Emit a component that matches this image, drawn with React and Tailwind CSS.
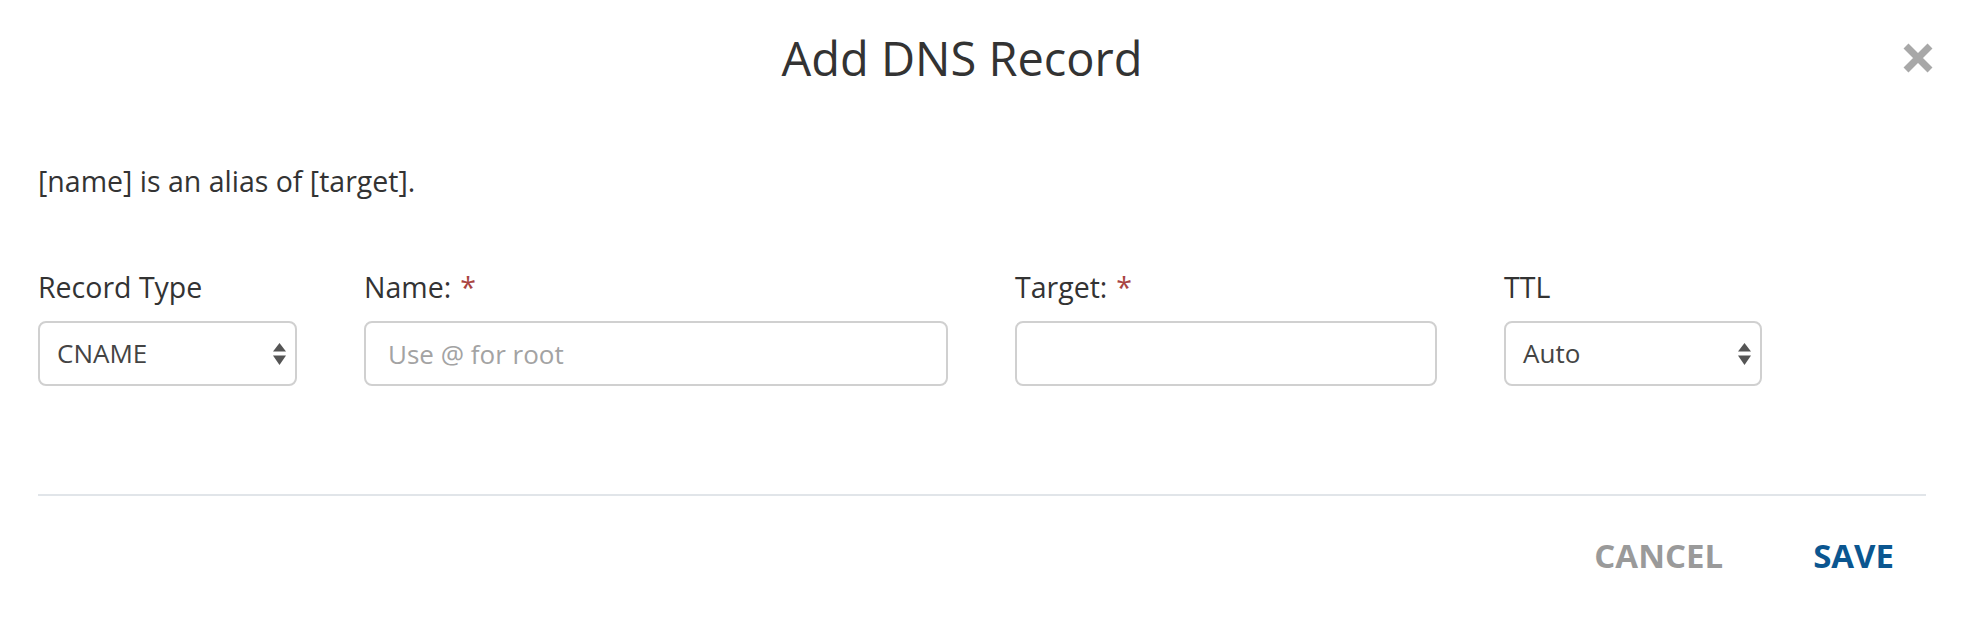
const SelectArrows = () => (
  <svg width="13" height="22" viewBox="0 0 13 22" className="shrink-0">
    <path d="M6.5 0 L13 8.5 L0 8.5 Z" fill="#555555" />
    <path d="M0 12.5 L13 12.5 L6.5 22 Z" fill="#555555" />
  </svg>
)

const Label = ({ children, required }) => (
  <div className="text-[28.5px] leading-[38px] text-[#333333]">
    {children}
    {required && <span className="ml-[9px] text-[#a94442]">*</span>}
  </div>
)

const FakeSelect = ({ value }) => (
  <div className="mt-[15px] flex h-[65px] items-center justify-between rounded-[8px] border-2 border-[#d0d0d0] bg-white pl-[17px] pr-[9px]">
    <span className="text-[26px] text-[#444444]">{value}</span>
    <SelectArrows />
  </div>
)

const TextInput = ({ placeholder }) => (
  <input
    type="text"
    placeholder={placeholder}
    className="mt-[15px] block h-[65px] w-full rounded-[8px] border-2 border-[#d0d0d0] bg-white pl-[22px] text-[26px] text-[#444444] outline-none placeholder:text-[#a3a3a3]"
  />
)

export default function App() {
  return (
    <div className="h-[624px] w-[1962px] overflow-hidden bg-white font-['Open_Sans',sans-serif] text-[#333333]">
      <header className="flex items-start pt-[26px]">
        <h1 className="flex-1 pl-[21px] text-center text-[47px] font-medium leading-[64px] text-[#333333]">
          Add DNS Record
        </h1>
        <button className="mr-[29px] mt-[17px] h-[30px] w-[30px]" aria-label="Close">
          <svg width="30" height="30" viewBox="0 0 30 30">
            <path d="M3 3 L27 27 M27 3 L3 27" stroke="#a8a8a8" strokeWidth="7" />
          </svg>
        </button>
      </header>

      <p className="mt-[72px] pl-[38px] text-[28.5px] leading-[38px]">[name] is an alias of [target].</p>

      <div className="mt-[68px] flex gap-[67px] pl-[38px]">
        <div className="w-[259px]">
          <Label>Record Type</Label>
          <FakeSelect value="CNAME" />
        </div>
        <div className="w-[584px]">
          <Label required>Name:</Label>
          <TextInput placeholder="Use @ for root" />
        </div>
        <div className="w-[422px]">
          <Label required>Target:</Label>
          <TextInput placeholder="" />
        </div>
        <div className="w-[258px]">
          <Label>TTL</Label>
          <FakeSelect value="Auto" />
        </div>
      </div>

      <div className="ml-[38px] mt-[108px] h-[2px] w-[1888px] bg-[#e1e5e9]" />

      <div className="mt-[38px] flex justify-end gap-[90px] pr-[68px] text-[33px] font-bold leading-[44px]">
        <button className="text-[#9a9a9a]">CANCEL</button>
        <button className="text-[#0b5690]">SAVE</button>
      </div>
    </div>
  )
}
